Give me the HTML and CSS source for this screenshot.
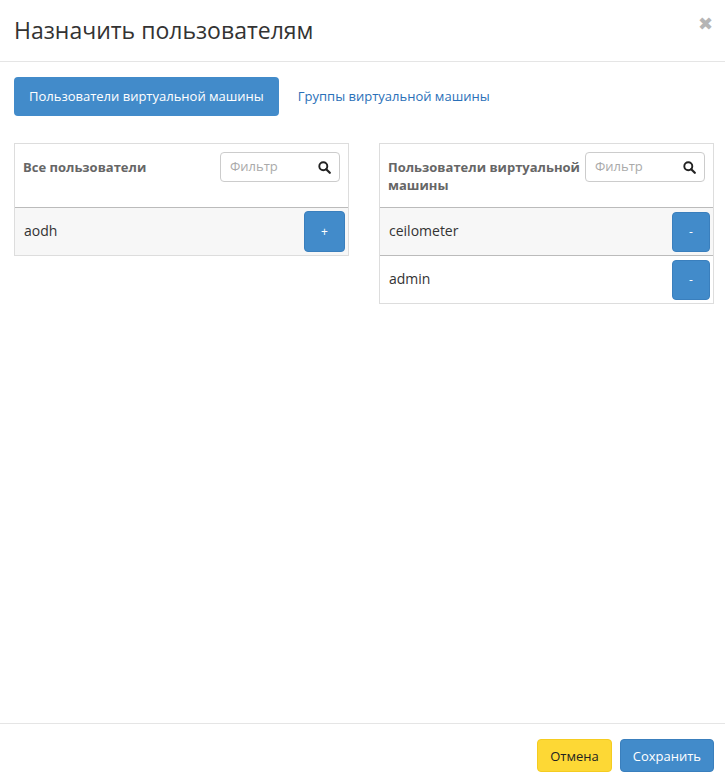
FILE: index.html
```html
<!DOCTYPE html>
<html lang="ru">
<head>
<meta charset="UTF-8">
<title>Назначить пользователям</title>
<link rel="stylesheet" href="styles.css">
</head>
<body>
<div class="modal">
  <div class="modal-header">
    <h4 class="modal-title">Назначить пользователям</h4>
    <span class="close">&#10006;</span>
  </div>

  <div class="modal-body">
    <ul class="tabs">
      <li class="tab active">Пользователи виртуальной машины</li>
      <li class="tab">Группы виртуальной машины</li>
    </ul>

    <div class="members">
      <div class="panel">
        <div class="panel-head">
          <span class="panel-title">Все пользователи</span>
          <div class="filter">
            <input type="text" placeholder="Фильтр">
            <svg class="search" width="13" height="13" viewBox="0 0 13 13"><circle cx="5.3" cy="5.3" r="4" fill="none" stroke="#222" stroke-width="1.9"/><path d="M8.2 8.2 L11.8 11.8" stroke="#222" stroke-width="2.2" stroke-linecap="round"/></svg>
          </div>
        </div>
        <div class="row odd">
          <span>aodh</span>
          <button class="btn-member wide">+</button>
        </div>
      </div>

      <div class="panel">
        <div class="panel-head">
          <span class="panel-title">Пользователи виртуальной машины</span>
          <div class="filter">
            <input type="text" placeholder="Фильтр">
            <svg class="search" width="13" height="13" viewBox="0 0 13 13"><circle cx="5.3" cy="5.3" r="4" fill="none" stroke="#222" stroke-width="1.9"/><path d="M8.2 8.2 L11.8 11.8" stroke="#222" stroke-width="2.2" stroke-linecap="round"/></svg>
          </div>
        </div>
        <div class="row odd">
          <span>ceilometer</span>
          <button class="btn-member">-</button>
        </div>
        <div class="row">
          <span>admin</span>
          <button class="btn-member">-</button>
        </div>
      </div>
    </div>
  </div>

  <div class="modal-footer">
    <button class="btn btn-cancel">Отмена</button>
    <button class="btn btn-save">Сохранить</button>
  </div>
</div>
</body>
</html>
```

FILE: styles.css
```css
body {
  margin: 0;
  font-family: 'Open Sans', 'DejaVu Sans', sans-serif;
  font-size: 13px;
  color: #333;
  background: #fff;
}

.modal {
  width: 725px;
  height: 782px;
  display: flex;
  flex-direction: column;
}

.modal-header {
  height: 62px;
  border-bottom: 1px solid #e5e5e5;
  display: flex;
  justify-content: space-between;
  align-items: flex-start;
  padding: 0 12px 0 14px;
  box-sizing: border-box;
}

.modal-title {
  margin: 14px 0 0;
  font-size: 23px;
  font-weight: 400;
  line-height: 33px;
  color: #333;
}

.close {
  margin-top: 11px;
  font-size: 18px;
  color: #b5b5b5;
  font-weight: bold;
}

.modal-body {
  flex: 1;
  padding: 15px 11px 0 14px;
}

.tabs {
  list-style: none;
  margin: 0;
  padding: 0;
  display: flex;
  gap: 4px;
}

.tab {
  height: 39px;
  line-height: 39px;
  padding: 0 15px;
  color: #2a70b8;
  border-radius: 4px;
}

.tab.active {
  background: #428bca;
  color: #fff;
}

.members {
  display: flex;
  justify-content: space-between;
  align-items: flex-start;
  margin-top: 27px;
}

.panel {
  width: 335px;
  border: 1px solid #ddd;
  box-sizing: border-box;
}

.panel-head {
  height: 64px;
  border-bottom: 1px solid #bbb;
  display: flex;
  justify-content: space-between;
  align-items: flex-start;
  padding: 8px 8px 0 8px;
  box-sizing: border-box;
}

.panel-title {
  font-weight: 700;
  color: #666;
  line-height: 18px;
  padding-top: 6px;
  max-width: 195px;
}

.filter {
  position: relative;
  width: 120px;
  height: 30px;
}

.filter input {
  width: 100%;
  height: 100%;
  box-sizing: border-box;
  border: 1px solid #ccc;
  border-radius: 4px;
  padding: 0 24px 3px 9px;
  font-family: inherit;
  font-size: 13px;
}

.filter input::placeholder {
  color: #aaa;
}

.search {
  position: absolute;
  right: 9px;
  top: 9px;
}

.row {
  height: 47px;
  display: flex;
  justify-content: space-between;
  align-items: center;
  padding: 0 3px 0 9px;
  font-size: 14px;
  color: #333;
}

.row span {
  margin-top: -2px;
}

.row + .row {
  border-top: 1px solid #bbb;
}

.row.odd {
  background: #f7f7f7;
}

.btn-member {
  width: 38px;
  height: 40px;
  border: 1px solid #3a7fbd;
  border-radius: 4px;
  background: #428bca;
  color: #fff;
  font-size: 12px;
  font-family: inherit;
}

.btn-member.wide {
  width: 41px;
  height: 41px;
}

.modal-footer {
  height: 59px;
  border-top: 1px solid #e5e5e5;
  display: flex;
  justify-content: flex-end;
  align-items: flex-start;
  gap: 8px;
  padding: 15px 11px 0 0;
  box-sizing: border-box;
}

.btn {
  height: 33px;
  padding: 0 12px;
  border-radius: 4px;
  font-family: inherit;
  font-size: 13px;
  border: 1px solid transparent;
}

.btn-cancel {
  background: #fdd835;
  border-color: #f5cc20;
  color: #222;
}

.btn-save {
  background: #428bca;
  border-color: #3a7fbd;
  color: #fff;
}
```
